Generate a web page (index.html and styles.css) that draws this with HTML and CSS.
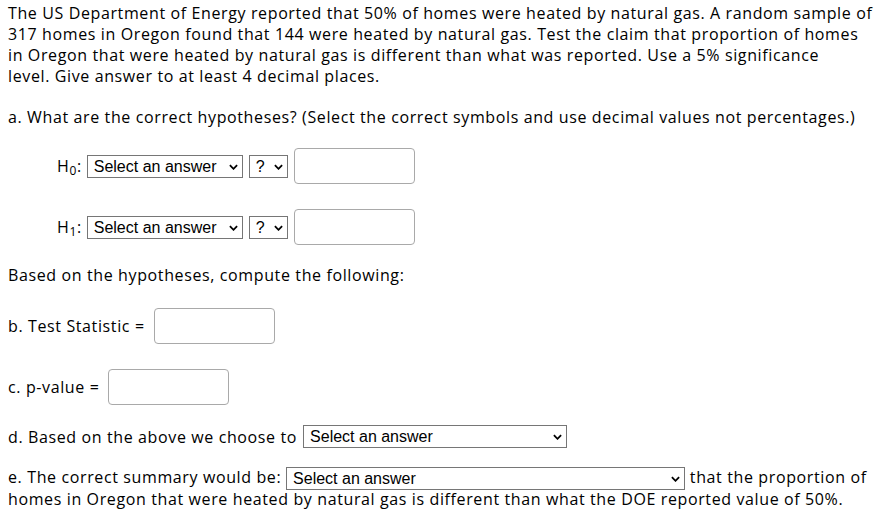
FILE: index.html
```html
<!DOCTYPE html>
<html>
<head>
<meta charset="utf-8">
<link rel="stylesheet" href="styles.css">
</head>
<body>
<div class="question">
  <p class="intro">The US Department of Energy reported that 50% of homes were heated by natural gas. A random sample of 317 homes in Oregon found that 144 were heated by natural gas. Test the claim that proportion of homes in Oregon that were heated by natural gas is different than what was reported. Use a 5% significance<br>level. Give answer to at least 4 decimal places.</p>

  <p class="part-a">a. What are the correct hypotheses? (Select the correct symbols and use decimal values not percentages.)</p>

  <div class="hyp-row">
    <span class="hyp-label">H<sub>0</sub>:</span>
    <span class="sel sel-hyp"><select><option>Select an answer</option></select><svg class="chev" viewBox="0 0 10 6"><path d="M1 1 L5 5 L9 1"/></svg></span>
    <span class="sel sel-op"><select><option>?</option></select><svg class="chev" viewBox="0 0 10 6"><path d="M1 1 L5 5 L9 1"/></svg></span>
    <input class="box" type="text">
  </div>

  <div class="hyp-row">
    <span class="hyp-label">H<sub>1</sub>:</span>
    <span class="sel sel-hyp"><select><option>Select an answer</option></select><svg class="chev" viewBox="0 0 10 6"><path d="M1 1 L5 5 L9 1"/></svg></span>
    <span class="sel sel-op"><select><option>?</option></select><svg class="chev" viewBox="0 0 10 6"><path d="M1 1 L5 5 L9 1"/></svg></span>
    <input class="box" type="text">
  </div>

  <p class="based">Based on the hypotheses, compute the following:</p>

  <div class="calc-row">
    <span>b. Test Statistic =</span>
    <input class="box" type="text">
  </div>

  <div class="calc-row">
    <span>c. p-value =</span>
    <input class="box" type="text">
  </div>

  <div class="part-d">
    <span>d. Based on the above we choose to</span>
    <span class="sel sel-d"><select><option>Select an answer</option></select><svg class="chev" viewBox="0 0 10 6"><path d="M1 1 L5 5 L9 1"/></svg></span>
  </div>

  <p class="part-e">e. The correct summary would be: <span class="sel sel-e"><select><option>Select an answer</option></select><svg class="chev" viewBox="0 0 10 6"><path d="M1 1 L5 5 L9 1"/></svg></span> that the proportion of homes in Oregon that were heated by natural gas is different than what the DOE reported value of 50%.</p>
</div>
</body>
</html>
```

FILE: styles.css
```css
html, body {
  margin: 0;
  padding: 0;
  background: #fff;
}

body {
  font-family: "Open Sans", "Noto Sans", sans-serif;
  font-size: 16px;
  letter-spacing: 0.62px;
  color: #000;
}

.question {
  padding: 3px 8px 0 8px;
}

p {
  margin: 0;
  line-height: 21px;
}

.intro {
  margin-bottom: 20px;
}

.part-a {
  margin-bottom: 20px;
}

.hyp-row {
  display: flex;
  align-items: center;
  gap: 6px;
  height: 36px;
  padding-left: 49px;
  margin-bottom: 25px;
}

.hyp-label {
  margin-right: -1px;
}

.hyp-label sub {
  font-size: 12px;
  vertical-align: -3px;
  line-height: 0;
}

.sel {
  position: relative;
  display: inline-block;
  vertical-align: middle;
  height: 23px;
  letter-spacing: 0;
}

.sel select {
  appearance: none;
  -webkit-appearance: none;
  box-sizing: border-box;
  display: block;
  height: 23px;
  width: 100%;
  margin: 0;
  border: 1px solid #767676;
  border-radius: 0;
  background: #fff;
  color: #000;
  font-family: "Liberation Sans", Arial, sans-serif;
  font-size: 16px;
  padding: 0 16px 0 6px;
  line-height: 21px;
}

.sel .chev {
  position: absolute;
  right: 5px;
  top: 9px;
  width: 9px;
  height: 6px;
  fill: none;
  stroke: #000;
  stroke-width: 2;
  pointer-events: none;
}

.sel-hyp { width: 156px; }
.sel-op { width: 39px; }
.sel-d { width: 264px; }
.sel-e { width: 399px; }

.box {
  box-sizing: border-box;
  width: 121px;
  height: 36px;
  border: 1px solid #a9a9a9;
  border-radius: 4px;
  margin: 0;
  padding: 0 4px;
  background: #fff;
}

.based {
  margin-top: -5px;
  margin-bottom: 22px;
}

.calc-row {
  display: flex;
  align-items: center;
  gap: 9px;
  height: 36px;
  margin-bottom: 25px;
}

.part-d {
  display: flex;
  align-items: center;
  gap: 6px;
  height: 23px;
  margin-top: -5px;
  margin-bottom: 18px;
}

.part-e {
  line-height: 22px;
}

.part-e .sel {
  margin: -3px 0;
}
```
